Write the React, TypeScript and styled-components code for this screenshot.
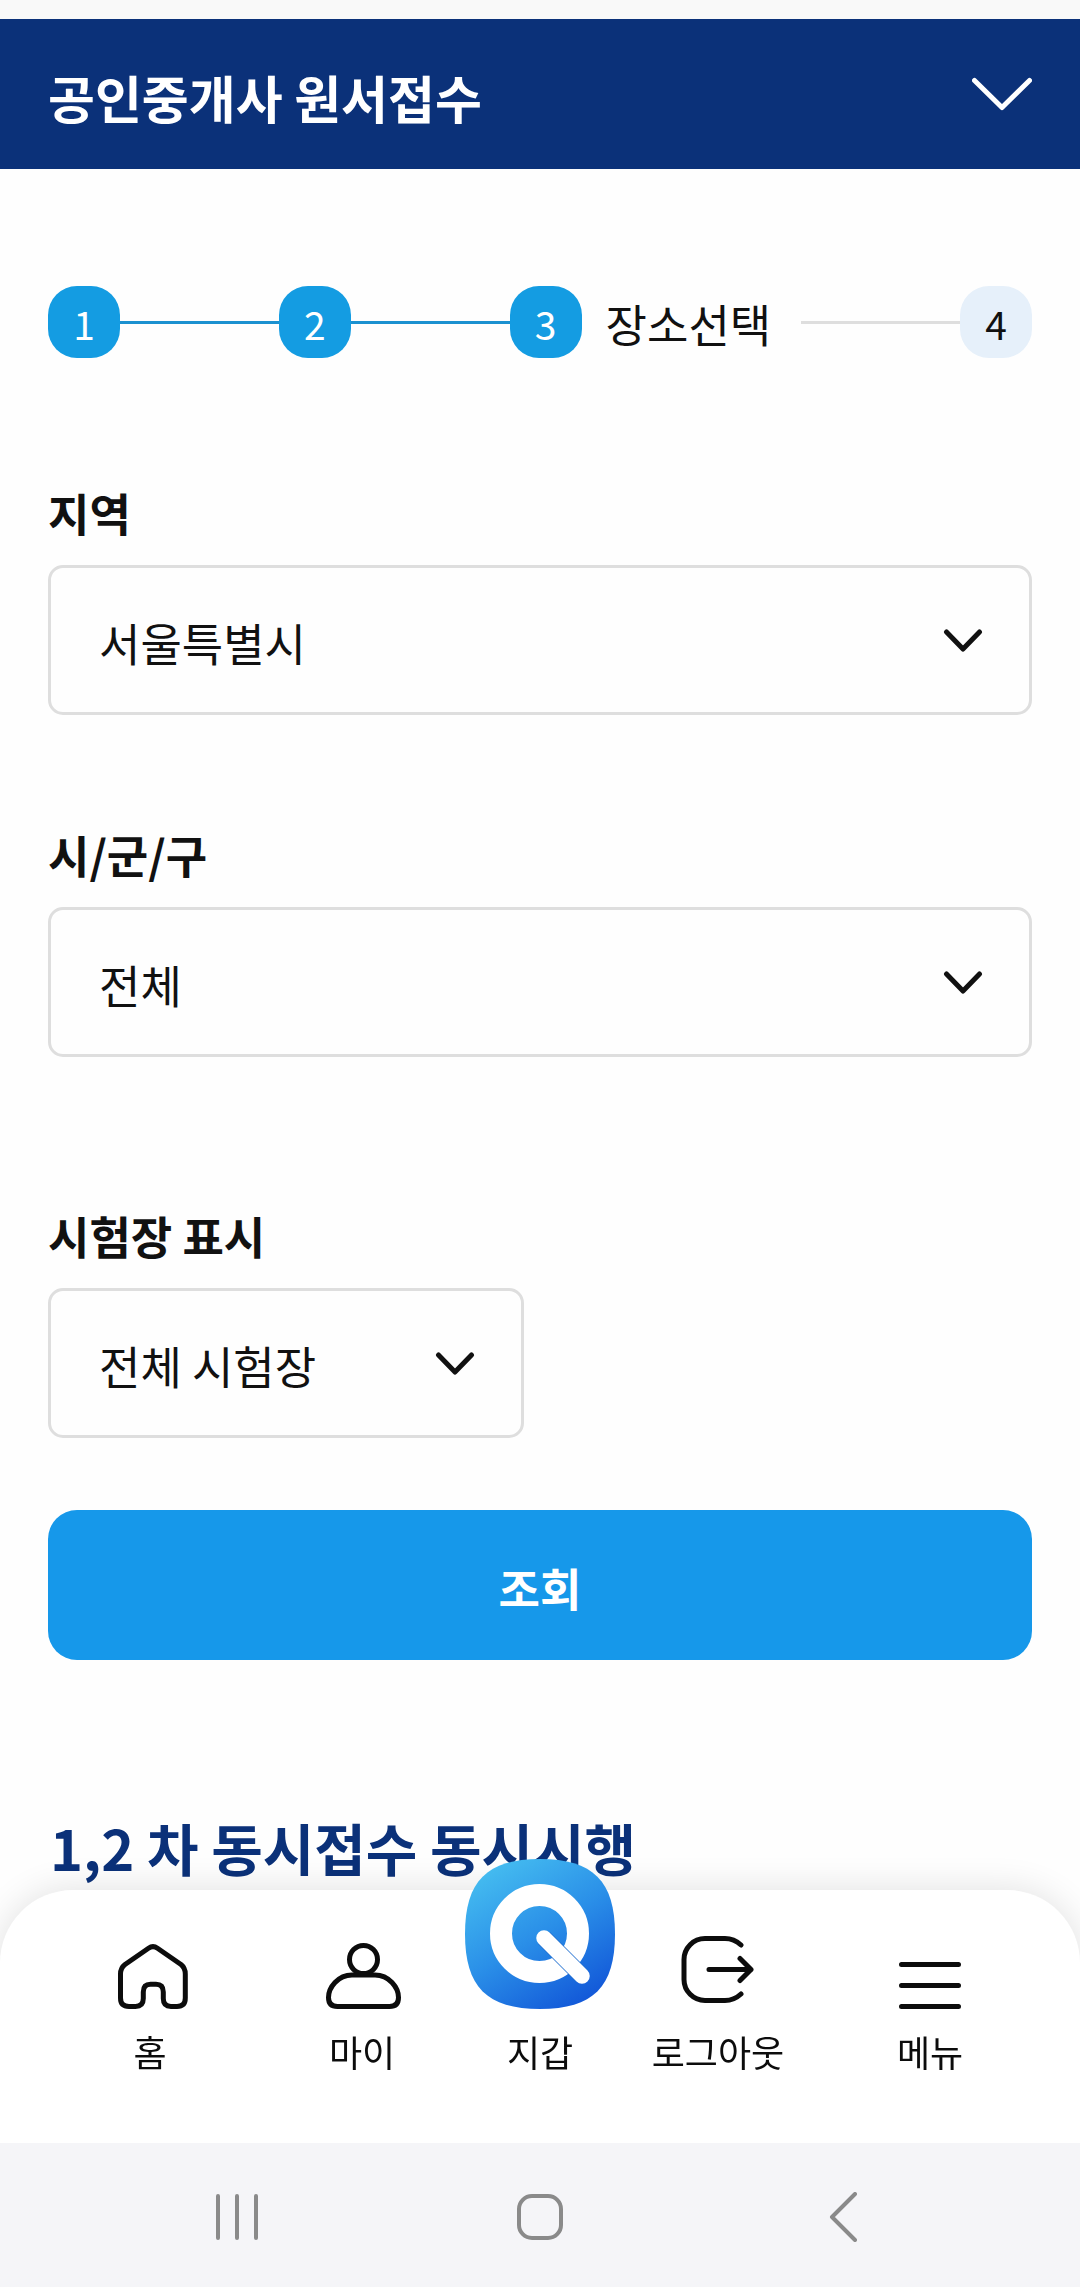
import React from "react";
import styled, { createGlobalStyle, css } from "styled-components";

const GlobalStyle = createGlobalStyle`
  *, *::before, *::after { box-sizing: border-box; }
  body {
    margin: 0;
    background: #fefefe;
    color: #111;
    font-family: "Noto Sans CJK KR", "Noto Sans", sans-serif;
  }
  button, select { font: inherit; color: inherit; }
`;

const Page = styled.div`
  display: flex;
  flex-direction: column;
  min-height: 100vh;
`;

const TopStrip = styled.div`
  height: 19px;
  background: #f9f9f9;
`;

const Header = styled.header`
  display: flex;
  align-items: center;
  justify-content: space-between;
  height: 150px;
  padding: 0 48px;
  background: #0b3179;
  color: #fff;
`;

const Title = styled.h1`
  margin: 0;
  padding-top: 6px;
  font-size: 51px;
  line-height: 72px;
  font-weight: 700;
`;

const HeaderToggle = styled.button`
  display: flex;
  padding: 0;
  border: 0;
  background: none;
`;

const Main = styled.main`
  display: flex;
  flex-direction: column;
  padding: 117px 48px 397px;
`;

const Steps = styled.ol`
  display: flex;
  align-items: center;
  height: 72px;
  margin: 0;
  padding: 0;
  list-style: none;
`;

const Step = styled.li`
  display: flex;
  align-items: center;
  flex: none;
`;

const StepLine = styled.li<{ $done?: boolean }>`
  flex: 1;
  height: 3px;
  background: ${(p) => (p.$done ? "#1b91d0" : "#dedede")};
`;

const StepBadge = styled.span<{ $done?: boolean }>`
  display: flex;
  align-items: center;
  justify-content: center;
  width: 72px;
  height: 72px;
  padding-top: 2px;
  border-radius: 29px;
  font-size: 39px;
  line-height: 56px;
  ${(p) =>
    p.$done
      ? css`
          background: #149ce2;
          color: #fff;
        `
      : css`
          background: #e6f0fa;
          color: #111;
        `}
`;

const StepName = styled.span`
  padding: 2px 30px 0 24px;
  font-size: 45px;
  line-height: 65px;
`;

const Form = styled.form`
  display: flex;
  flex-direction: column;
  margin-top: 122px;
`;

const Field = styled.div<{ $spaced?: boolean; $narrow?: boolean }>`
  display: flex;
  flex-direction: column;
  gap: 20px;
  width: ${(p) => (p.$narrow ? "476px" : "100%")};
  max-width: 100%;
  margin-bottom: ${(p) => (p.$narrow ? 72 : p.$spaced ? 146 : 107)}px;
`;

const Label = styled.label`
  font-size: 45px;
  line-height: 65px;
  font-weight: 700;
`;

const SelectBox = styled.div`
  display: grid;
  align-items: center;

  & > * { grid-area: 1 / 1; }
  & > svg {
    justify-self: end;
    margin-right: 49px;
    pointer-events: none;
  }
`;

const Select = styled.select`
  appearance: none;
  width: 100%;
  height: 150px;
  padding: 4px 100px 0 48px;
  border: 3px solid #dedede;
  border-radius: 15px;
  background: #fefefe;
  font-size: 45px;
  line-height: 65px;
`;

const SubmitButton = styled.button`
  height: 150px;
  padding: 4px 0 0;
  border: 0;
  border-radius: 29px;
  background: #1698ea;
  color: #fff;
  font-size: 45px;
  line-height: 65px;
  font-weight: 700;
`;

const SectionTitle = styled.h2`
  margin: 146px 0 0;
  padding: 0 2px;
  color: #0b3179;
  font-size: 56px;
  line-height: 82px;
  font-weight: 700;
`;

const Dock = styled.div`
  position: fixed;
  left: 0;
  right: 0;
  bottom: 0;
`;

const TabBar = styled.nav`
  display: grid;
  grid-template-columns: 1fr 1fr 144px 1fr 1fr;
  grid-template-rows: 100%;
  align-items: end;
  height: 253px;
  padding: 0 44px 66px;
  border-radius: 73px 73px 0 0;
  background: #fff;
  box-shadow: 0 0 36px rgba(0, 0, 0, 0.12);
`;

const Tab = styled.a`
  display: flex;
  flex-direction: column;
  align-items: center;
  gap: 16px;
  color: #0c0c0c;
  font-size: 36px;
  line-height: 52px;
  text-decoration: none;
  white-space: nowrap;

  & > svg { flex: none; }
`;

const SystemBar = styled.div`
  position: relative;
  display: grid;
  grid-template-columns: repeat(3, 303px);
  justify-content: center;
  align-items: center;
  height: 144px;
  padding-top: 4px;
  background: #f5f5f8;
`;

const SystemButton = styled.button`
  display: flex;
  justify-content: center;
  padding: 0;
  border: 0;
  background: none;
  color: #8a8a8a;
`;

const stroke = {
  fill: "none",
  stroke: "currentColor",
  strokeLinecap: "round" as const,
  strokeLinejoin: "round" as const,
};

const HeaderChevron = () => (
  <svg width="60" height="36" viewBox="0 0 60 36" {...stroke} strokeWidth="5" aria-hidden="true">
    <path d="M2.500 4.500 30 31.500 57.500 4.500" />
  </svg>
);

const SelectChevron = () => (
  <svg width="40" height="28" viewBox="0 0 40 28" {...stroke} strokeWidth="5" aria-hidden="true">
    <path d="M3.500 6 20 23 36.500 6" />
  </svg>
);

const HomeIcon = () => (
  <svg width="76" height="66" viewBox="0 0 76 66" {...stroke} strokeWidth="5" aria-hidden="true">
    <path d="M36.500 5.200Q41 2 45.500 5.200L69 21.500Q73.300 25 73.300 31V55Q73.300 63.400 65 63.400H59Q51.300 63.400 51.300 55.500V49Q51.300 41.300 44 41.300H38.500Q31.300 41.300 31.300 49V55.500Q31.300 63.400 23.500 63.400H17Q8.500 63.400 8.500 55V31Q8.500 25 13 21.500Z" />
  </svg>
);

const PersonIcon = () => (
  <svg width="82" height="66" viewBox="0 0 82 66" {...stroke} strokeWidth="5" aria-hidden="true">
    <circle cx="42.500" cy="16.500" r="14" />
    <path d="M31 32H54C68 32 77.500 44.500 77.500 54.500Q77.500 63.500 68.500 63.500H16.500Q7.500 63.500 7.500 54.500C7.500 44.500 17 32 31 32Z" />
  </svg>
);

const WalletLogo = () => (
  <svg width="150" height="150" viewBox="0 0 150 150" aria-hidden="true">
    <defs>
      <linearGradient id="walletFill" x1="0.15" y1="0.05" x2="0.75" y2="1">
        <stop offset="0" stopColor="#45bdf0" />
        <stop offset="0.5" stopColor="#2a8fe8" />
        <stop offset="1" stopColor="#1257d8" />
      </linearGradient>
    </defs>
    <path
      fill="url(#walletFill)"
      d="M75 0C128 0 150 22 150 75S128 150 75 150 0 128 0 75 22 0 75 0Z"
    />
    <circle cx="74.500" cy="74.500" r="38.500" fill="none" stroke="#fff" strokeWidth="22" />
    <path d="M79 79 117 117" stroke="#1f6fd0" strokeWidth="17" />
    <path d="M79 79 117 117" stroke="#fff" strokeWidth="15.500" strokeLinecap="round" />
  </svg>
);

const LogoutIcon = () => (
  <svg width="76" height="74" viewBox="0 0 76 74" {...stroke} strokeWidth="5" aria-hidden="true">
    <path d="M61 10Q54 3.500 45 3.500H25A21 21 0 0 0 4 24.500V44.500A21 21 0 0 0 25 65.500H45Q54 65.500 61 59" />
    <path d="M29 34.500H71M60 23.500 71 34.500 60 45.500" />
  </svg>
);

const MenuIcon = () => (
  <svg width="64" height="66" viewBox="0 0 64 66" {...stroke} strokeWidth="5" aria-hidden="true">
    <path d="M3.500 21.500H60.500M3.500 42.500H60.500M3.500 63.500H60.500" />
  </svg>
);

const RecentsIcon = () => (
  <svg width="44" height="48" viewBox="0 0 44 48" {...stroke} strokeWidth="4" aria-hidden="true">
    <path d="M3 3V45M22 3V45M41 3V45" />
  </svg>
);

const SystemHomeIcon = () => (
  <svg width="48" height="48" viewBox="0 0 48 48" {...stroke} strokeWidth="4" aria-hidden="true">
    <rect x="3" y="3" width="42" height="42" rx="13" />
  </svg>
);

const BackIcon = () => (
  <svg width="28" height="50" viewBox="0 0 28 50" {...stroke} strokeWidth="4" aria-hidden="true">
    <path d="M26 2 3 25 26 48" />
  </svg>
);

const fields = [
  { id: "region", label: "지역", value: "서울특별시" },
  { id: "district", label: "시/군/구", value: "전체", spaced: true },
  { id: "venue", label: "시험장 표시", value: "전체 시험장", narrow: true },
];

const tabs = [
  { label: "홈", Icon: HomeIcon },
  { label: "마이", Icon: PersonIcon },
  { label: "지갑", Icon: WalletLogo },
  { label: "로그아웃", Icon: LogoutIcon },
  { label: "메뉴", Icon: MenuIcon },
];

export default function App() {
  return (
    <Page>
      <GlobalStyle />
      <TopStrip />
      <Header>
        <Title>공인중개사 원서접수</Title>
        <HeaderToggle type="button" aria-label="펼치기">
          <HeaderChevron />
        </HeaderToggle>
      </Header>
      <Main>
        <Steps>
          <Step>
            <StepBadge $done>1</StepBadge>
          </Step>
          <StepLine $done aria-hidden="true" />
          <Step>
            <StepBadge $done>2</StepBadge>
          </Step>
          <StepLine $done aria-hidden="true" />
          <Step aria-current="step">
            <StepBadge $done>3</StepBadge>
            <StepName>장소선택</StepName>
          </Step>
          <StepLine aria-hidden="true" />
          <Step>
            <StepBadge>4</StepBadge>
          </Step>
        </Steps>
        <Form onSubmit={(e) => e.preventDefault()}>
          {fields.map((f) => (
            <Field key={f.id} $spaced={f.spaced} $narrow={f.narrow}>
              <Label htmlFor={f.id}>{f.label}</Label>
              <SelectBox>
                <Select id={f.id} defaultValue={f.value}>
                  <option>{f.value}</option>
                </Select>
                <SelectChevron />
              </SelectBox>
            </Field>
          ))}
          <SubmitButton type="submit">조회</SubmitButton>
        </Form>
        <SectionTitle>1,2 차 동시접수 동시시행</SectionTitle>
      </Main>
      <Dock>
        <TabBar>
          {tabs.map(({ label, Icon }) => (
            <Tab key={label} href="#">
              <Icon />
              {label}
            </Tab>
          ))}
        </TabBar>
        <SystemBar>
          <SystemButton type="button" aria-label="최근 앱">
            <RecentsIcon />
          </SystemButton>
          <SystemButton type="button" aria-label="홈 화면">
            <SystemHomeIcon />
          </SystemButton>
          <SystemButton type="button" aria-label="뒤로">
            <BackIcon />
          </SystemButton>
        </SystemBar>
      </Dock>
    </Page>
  );
}
